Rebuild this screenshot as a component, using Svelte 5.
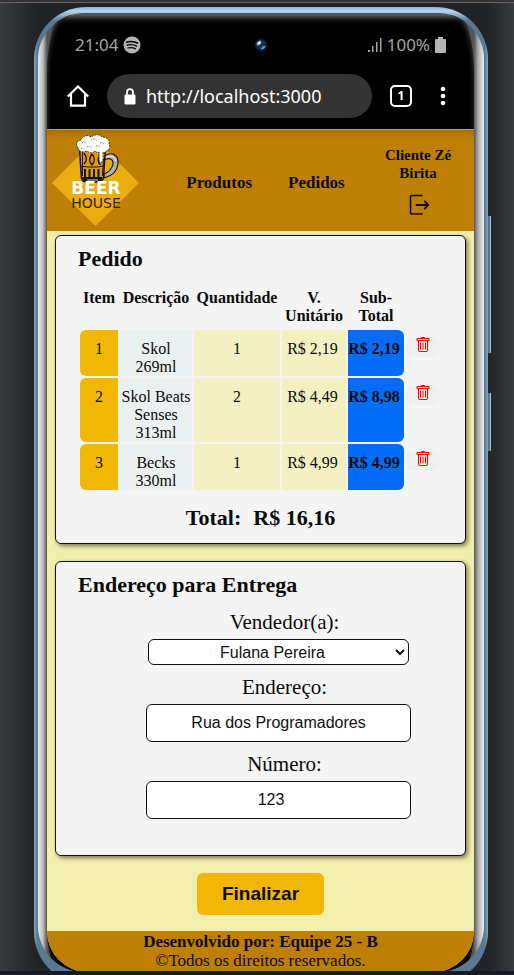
<script>
  const items = [
    { id: 1, name: 'Skol 269ml', qty: 1, unit: 2.19 },
    { id: 2, name: 'Skol Beats Senses 313ml', qty: 2, unit: 4.49 },
    { id: 3, name: 'Becks 330ml', qty: 1, unit: 4.99 },
  ];
  const sellers = ['Fulana Pereira'];

  let order = $state(items);
  let seller = $state(sellers[0]);
  let street = $state('Rua dos Programadores');
  let number = $state(123);

  const price = (value) => 'R$ ' + value.toFixed(2).replace('.', ',');
  const total = $derived(order.reduce((sum, item) => sum + item.qty * item.unit, 0));
  const remove = (id) => (order = order.filter((item) => item.id !== id));
</script>

<div class="stage">
  <div class="phone">
    <span class="side volume"></span>
    <span class="side power"></span>
    <div class="bezel">
      <div class="screen">
        <div class="status">
          <div class="cluster">
            <span>21:04</span>
            <svg width="18" height="18" viewBox="0 0 18 18" aria-hidden="true">
              <circle cx="9" cy="9" r="8.5" fill="#b5b5b5" />
              <g fill="none" stroke="#000" stroke-linecap="round">
                <path d="M3.6 6.2c3.6-1.1 7.6-.8 10.8.9" stroke-width="1.7" />
                <path d="M4.2 9.2c3.2-.9 6.500-.6 9.300.9" stroke-width="1.4" />
                <path d="M4.800 12c2.700-.7 5.300-.5 7.600.8" stroke-width="1.200" />
              </g>
            </svg>
          </div>
          <svg width="14" height="14" viewBox="0 0 14 14" aria-hidden="true">
            <circle cx="7" cy="7" r="6.500" fill="#10161d" />
            <circle cx="7" cy="7" r="5" fill="#12314c" />
            <path d="M2.500 6.500a4.500 4.500 0 0 1 4-4l1 2-3 3z" fill="#7fb9e6" />
            <path d="M11.500 8a4.500 4.500 0 0 1-4 3.600l-.5-1.600 2.500-2z" fill="#4f9bd4" />
            <circle cx="5.500" cy="5" r="1.200" fill="#fff" />
          </svg>
          <div class="cluster right">
            <svg width="14" height="16" viewBox="0 0 14 16" fill="#a5a5a5" aria-hidden="true">
              <path d="M0 13h2v2H0zM4 9h1.500v6H4zM8 5h1.500v10H8zM12 1h1.500v14H12z" />
            </svg>
            <span>100%</span>
            <svg width="11" height="16" viewBox="0 0 11 16" fill="#b5b5b5" aria-hidden="true">
              <path d="M3 0h5v2h2a1 1 0 0 1 1 1v12a1 1 0 0 1-1 1H1a1 1 0 0 1-1-1V3a1 1 0 0 1 1-1h2z" />
            </svg>
          </div>
        </div>

        <div class="toolbar">
          <button class="tool" aria-label="Início">
            <svg width="22" height="22" viewBox="0 0 22 22" fill="none" stroke="#fff" stroke-width="2.200">
              <path d="M.8 11.500 11 1.500l10.200 10M4 9v11.700h14V9" />
            </svg>
          </button>
          <div class="address">
            <svg width="12" height="17" viewBox="0 0 12 17" aria-hidden="true">
              <path d="M3 7V4.200a3 3 0 0 1 6 0V7" fill="none" stroke="#fff" stroke-width="1.800" />
              <rect x=".5" y="6.500" width="11" height="10" rx="1.200" fill="#fff" />
            </svg>
            <span>http://localhost:3000</span>
          </div>
          <button class="tab" aria-label="Abas">1</button>
          <button class="tool" aria-label="Menu">
            <svg width="6" height="20" viewBox="0 0 6 20" fill="#fff">
              <circle cx="3" cy="3" r="2.300" /><circle cx="3" cy="10" r="2.300" /><circle cx="3" cy="17" r="2.300" />
            </svg>
          </button>
        </div>

        <div class="page">
          <header>
            <a class="logo" href="#inicio" aria-label="Beer House">
              <svg width="88" height="94" viewBox="0 0 88 94" aria-hidden="true">
                <path d="M0 49 43.500 5 87 49 43.500 92z" fill="#e9ad10" />
                <g stroke="#17120a" stroke-linejoin="round">
                  <path d="M52 22c8-5 15-1 14 8-1 8-6 12-14 14v-4c5-2 8-5 9-10 .5-5-4-7-9-4z" fill="#b5b1a8" stroke-width="1.200" />
                  <path d="M54 23.500c5-2.500 9-1 9.500 3.500" fill="none" stroke="#fff" stroke-width="1" />
                  <path d="M27.500 14h26l-2 29c-.2 3-2 4.500-5 4.500H34c-3 0-4.500-1.500-4.700-4.500z" fill="#dc9c12" stroke-width="1.500" />
                  <path d="M32 19c3 4 3 8 0 11M40 20c-3 4-3 8 0 11 3-3 3-8 0-11M48.500 20c-3 4-3 8 0 11" fill="none" stroke-width="1.300" />
                  <path d="M33 35v8M37.500 35v9M42 35v9M46.500 35v8" fill="none" stroke-width="2" />
                  <path d="M29 32c7 1.500 16 1.500 23 0M30.500 17v25M51.500 25l-1 17" fill="none" stroke-width="1" />
                  <path d="M30.500 43.500h19.500c0 3-2 4.500-4 4.500H35c-2 0-4.500-1.500-4.500-4.500z" fill="#17120a" />
                  <path d="M35 46h11" stroke="#ddd" stroke-width="1" />
                </g>
                <path d="M26 14c-3-3-1-8 3-8 1-4 6-6 10-3 4-3 9-3 11 0 5 0 8 3 7 7 2 3 0 7-3 7-1 2-2 2-3 1v8c0 3-4 3-4 0v-8c-2 1-3 0-4-1-3 3-6 2-8 0-4 2-8 1-9-3z" fill="#fff" stroke="#26221c" stroke-width=".9" stroke-dasharray="2 1" />
                <path d="M30 9c2-2 4-1 5 0M39 6c2-2 5-1 6 1M48 9c2-1 4 0 4 2M35 13c2-1 4-1 5 1M44 12c2-1 4 0 4 2M29 14l3 1M47 19v6" fill="none" stroke="#777" stroke-width=".9" stroke-dasharray="1.500 1" />
              </svg>
              <span class="brand"><b>BEER</b><span>HOUSE</span></span>
            </a>
            <nav>
              <a href="#produtos">Produtos</a>
              <a href="#pedidos">Pedidos</a>
            </nav>
            <div class="user">
              <span>Cliente Zé Birita</span>
              <button class="tool" aria-label="Sair">
                <svg width="22" height="22" viewBox="0 0 22 22" fill="none" stroke="#0b0803" stroke-width="1.500" stroke-linecap="round" stroke-linejoin="round">
                  <path d="M15 1.500H4.500a1 1 0 0 0-1 1v16.500a1 1 0 0 0 1 1H15" />
                  <path d="M9.500 11h12M17.800 7.300 21.300 11l-3.500 3.700" stroke-width="1.800" />
                </svg>
              </button>
            </div>
          </header>

          <main>
            <section class="card">
              <h2>Pedido</h2>
              <table>
                <colgroup>
                  <col class="c-item" /><col class="c-name" /><col class="c-qty" /><col class="c-unit" /><col class="c-sub" /><col class="c-del" />
                </colgroup>
                <thead>
                  <tr>
                    <th>Item</th><th>Descrição</th><th>Quantidade</th><th>V. Unitário</th><th>Sub-Total</th><td></td>
                  </tr>
                </thead>
                <tbody>
                  {#each order as item, index (item.id)}
                    <tr>
                      <td class="item">{index + 1}</td>
                      <td class="name">{item.name}</td>
                      <td class="pale">{item.qty}</td>
                      <td class="pale unit">{price(item.unit)}</td>
                      <td class="sub">{price(item.qty * item.unit)}</td>
                      <td class="del">
                        <button aria-label="Remover {item.name}" onclick={() => remove(item.id)}>
                          <svg width="16" height="16" viewBox="0 0 16 16" fill="#f00">
                            <path d="M5.500 5.500A.5.500 0 0 1 6 6v6a.5.500 0 0 1-1 0V6a.5.500 0 0 1 .5-.5zm2.500 0a.5.500 0 0 1 .5.500v6a.5.500 0 0 1-1 0V6a.5.500 0 0 1 .5-.5zm3 .5a.5.500 0 0 0-1 0v6a.5.500 0 0 0 1 0V6z" />
                            <path fill-rule="evenodd" d="M14.500 3a1 1 0 0 1-1 1H13v9a2 2 0 0 1-2 2H5a2 2 0 0 1-2-2V4h-.5a1 1 0 0 1-1-1V2a1 1 0 0 1 1-1H6a1 1 0 0 1 1-1h2a1 1 0 0 1 1 1h3.500a1 1 0 0 1 1 1v1zM4.118 4 4 4.059V13a1 1 0 0 0 1 1h6a1 1 0 0 0 1-1V4.059L11.882 4H4.118zM2.500 3V2h11v1h-11z" />
                          </svg>
                        </button>
                      </td>
                    </tr>
                  {/each}
                </tbody>
              </table>
              <p class="total"><span>Total:</span><span>{price(total)}</span></p>
            </section>

            <section class="card">
              <h2>Endereço para Entrega</h2>
              <form id="delivery">
                <label for="seller">Vendedor(a):</label>
                <select id="seller" bind:value={seller}>
                  {#each sellers as name}
                    <option value={name}>{name}</option>
                  {/each}
                </select>
                <label for="street">Endereço:</label>
                <input id="street" type="text" bind:value={street} />
                <label for="number">Número:</label>
                <input id="number" type="number" bind:value={number} />
              </form>
            </section>

            <button class="submit" type="button">Finalizar</button>
          </main>

          <footer>
            <strong>Desenvolvido por: Equipe 25 - B</strong>
            <span>©Todos os direitos reservados.</span>
          </footer>
        </div>
      </div>
    </div>
  </div>
</div>

<style>
  :global(body) {
    margin: 0;
    background: #151b20;
  }
  .stage {
    overflow: hidden;
    box-sizing: border-box;
    padding: 4px 26px 0 34px;
    border-bottom: 4px solid #151b20;
    background:
      linear-gradient(#333 0 2px, #666 2px 3px, transparent 3px),
      linear-gradient(90deg, #393a3e 0, #222325 36px, #222325 calc(100% - 28px), #38393d 100%);
    font-family: 'Liberation Serif', 'Times New Roman', serif;
    font-size: 16px;
    line-height: 18px;
    color: #0b0b0b;
  }
  button {
    font: inherit;
    color: inherit;
    border: 0;
    padding: 0;
    background: none;
    cursor: pointer;
  }
  svg {
    display: block;
    flex: none;
  }
  a {
    color: inherit;
    text-decoration: none;
  }

  .phone {
    position: relative;
    margin: 3px 0 -13px;
    padding: 6px 4px 12px;
    border-radius: 52px;
    background:
      linear-gradient(90deg, #86a9bf 0, #587b93 3px, transparent 4px, transparent calc(100% - 4px), #587b93 calc(100% - 3px), #86a9bf 100%),
      linear-gradient(#86b4d5 0, #b4d8f0 4px, #587b93 14px);
  }
  .side {
    position: absolute;
    left: 100%;
    width: 3px;
    border-right: 1px solid #9cc4dd;
    box-sizing: border-box;
    background: #54768c;
  }
  .volume {
    top: 209px;
    height: 137px;
  }
  .power {
    top: 386px;
    height: 58px;
  }
  .bezel {
    overflow: hidden;
    padding: 2px 10px 0 9px;
    border-radius: 46px;
    background: linear-gradient(90deg, #e9e9e9 0, #bdbdbd 5px, #555 9px, #555 calc(100% - 10px), #aaa calc(100% - 6px), #f0f0f0 100%);
  }
  .screen {
    overflow: hidden;
    border-radius: 16px 16px 14px 14px / 60px 60px 44px 44px;
    background: #000;
    box-shadow: inset 0 4px 6px -2px #777;
  }

  .status {
    display: flex;
    align-items: center;
    justify-content: space-between;
    padding: 18px 28px 0;
    font-family: 'Noto Sans', sans-serif;
    font-size: 17px;
    line-height: 24px;
    color: #a5a5a5;
  }
  .cluster {
    display: flex;
    flex: 1;
    align-items: center;
    gap: 5px;
  }
  .right {
    justify-content: flex-end;
  }
  .toolbar {
    display: flex;
    align-items: center;
    padding: 17px 28px 11px 20px;
    gap: 18px;
    color: #fff;
  }
  .address {
    display: flex;
    flex: 1;
    align-items: center;
    gap: 10px;
    height: 44px;
    padding: 0 17px;
    border-radius: 22px;
    background: #333;
    font-family: 'Noto Sans', sans-serif;
    font-size: 18px;
  }
  .tab {
    width: 22px;
    height: 22px;
    margin-right: 10px;
    box-sizing: border-box;
    border: 2px solid #fff;
    border-radius: 5px;
    font: bold 12px/18px 'Noto Sans', sans-serif;
  }

  .page {
    overflow: hidden;
    border-radius: 0 0 41px 41px;
    background: #f2eeac;
  }
  header {
    display: flex;
    align-items: center;
    justify-content: space-between;
    min-height: 101px;
    padding: 0 21px 0 5px;
    border-top: 1px solid #b9a04a;
    background: linear-gradient(#a86d03, #bf7e04 8px);
    font-weight: bold;
  }
  .logo {
    position: relative;
  }
  .brand {
    position: absolute;
    left: 0;
    right: 0;
    top: 47px;
    display: flex;
    flex-direction: column;
    align-items: center;
    font-family: 'DejaVu Sans', sans-serif;
    font-size: 14px;
    line-height: 15px;
    font-weight: normal;
    color: #2d200b;
  }
  .brand b {
    font-size: 17px;
    color: #fff;
  }
  nav {
    display: flex;
    gap: 36px;
    padding: 5px 0 0 8px;
    font-size: 17px;
  }
  .user {
    display: flex;
    flex-direction: column;
    align-items: center;
    gap: 12px;
    width: 70px;
    text-align: center;
    font-size: 15px;
  }

  main {
    display: flex;
    flex-direction: column;
    gap: 17px;
    padding: 4px 8px 16px;
  }
  .card {
    padding: 10px 22px 12px;
    border: 1px solid #111;
    border-radius: 6px;
    background: #f4f4f4;
    box-shadow: 2px 2px 4px rgba(0, 0, 0, 0.5);
  }
  h2 {
    margin: 0;
    font-size: 22px;
    line-height: 26px;
  }
  table {
    margin-top: 14px;
    border-spacing: 2px;
    text-align: center;
  }
  .c-item { width: 38px; }
  .c-name { width: 72px; }
  .c-qty { width: 86px; }
  .c-unit { width: 64px; }
  .c-sub { width: 56px; }
  .c-del { width: 34px; }
  th {
    padding: 1px 0 3px;
    vertical-align: top;
  }
  td {
    padding: 10px 0 0;
    vertical-align: top;
  }
  .item {
    border-radius: 6px 0 0 6px;
    background: #f2b705;
  }
  .name {
    background: #eaf0ef;
  }
  .pale {
    background: #f2f0c0;
  }
  .unit {
    padding-right: 3px;
  }
  .sub {
    padding-right: 4px;
    border-radius: 0 6px 6px 0;
    background: #056cf9;
    font-weight: bold;
    white-space: nowrap;
  }
  .del {
    padding-top: 7px;
  }
  .del button {
    display: flex;
    justify-content: center;
    width: 100%;
    height: 20px;
    border-radius: 6px;
    background: #efefef;
  }
  .total {
    display: flex;
    justify-content: center;
    gap: 12px;
    margin: 13px 0 0;
    font-size: 22px;
    line-height: 26px;
    font-weight: bold;
  }

  form {
    display: flex;
    flex-direction: column;
    align-items: center;
    padding: 2px 0 24px 36px;
  }
  label {
    margin: 10px 0 5px;
    padding-left: 12px;
    font-size: 21px;
    line-height: 24px;
  }
  select,
  input {
    box-sizing: border-box;
    border: 1px solid #111;
    border-radius: 6px;
    background: #fff;
    color: #111;
    font: 16px 'Liberation Sans', Arial, sans-serif;
    text-align: center;
  }
  select {
    width: 261px;
    height: 26px;
    max-width: 100%;
  }
  input {
    width: 265px;
    height: 38px;
    max-width: 100%;
  }
  .submit {
    align-self: center;
    padding: 10px 25px;
    border-radius: 6px;
    background: #f2b705;
    font: bold 19px/22px 'Liberation Sans', Arial, sans-serif;
    color: #0b0b0b;
  }

  footer {
    display: flex;
    flex-direction: column;
    align-items: center;
    padding: 1px 0 2px;
    background: #bf7e04;
    font-size: 17px;
    line-height: 19px;
  }
</style>
